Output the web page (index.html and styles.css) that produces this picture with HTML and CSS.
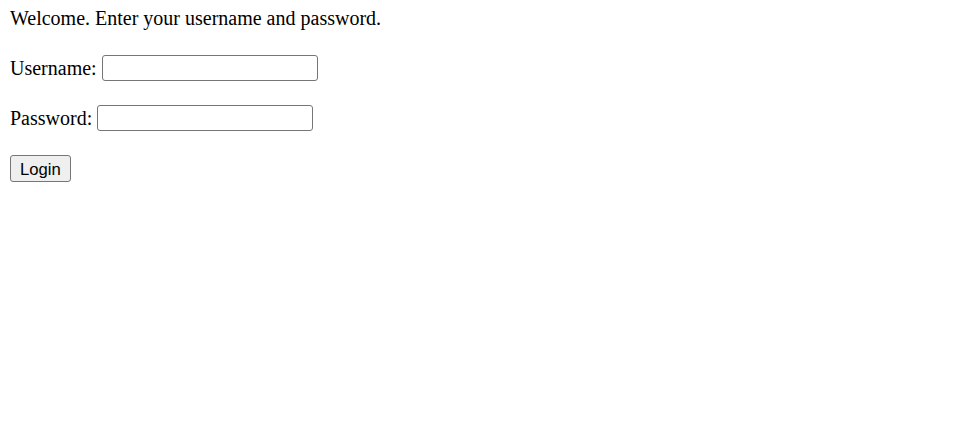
FILE: index.html
```html
<!DOCTYPE html>
<html>
<head>
<meta charset="utf-8">
<link rel="stylesheet" href="styles.css">
</head>
<body>
<div class="page">
  <div class="intro">Welcome. Enter your username and password.</div>
  <div class="row"><label class="label" for="u">Username:</label><input class="field" id="u" type="text"></div>
  <div class="row"><label class="label" for="p">Password:</label><input class="field" id="p" type="password"></div>
  <div class="row row-btn"><button class="btn" type="button">Login</button></div>
</div>
</body>
</html>
```
FILE: styles.css
```css
html, body {
  margin: 0;
  padding: 0;
  background: #ffffff;
}
.page {
  display: flex;
  flex-direction: column;
  gap: 24px;
  padding: 7px 10px 0 10px;
  font-family: "Liberation Serif", "Times New Roman", serif;
  font-size: 20px;
  color: #000000;
}
.intro {
  height: 24px;
  line-height: 23px;
  white-space: nowrap;
}
.row {
  display: flex;
  align-items: center;
  height: 26px;
}
.row-btn {
  height: 27px;
  align-items: flex-start;
}
.label {
  line-height: 23px;
  white-space: nowrap;
}
.field {
  -webkit-appearance: none;
  appearance: none;
  box-sizing: border-box;
  margin: 0 0 0 5px;
  width: 216px;
  height: 26px;
  padding: 1px 3px;
  border: 1px solid #767676;
  border-radius: 3px;
  background: #ffffff;
  font-family: "Liberation Sans", Arial, sans-serif;
  font-size: 16.67px;
}
.btn {
  -webkit-appearance: none;
  appearance: none;
  box-sizing: border-box;
  display: block;
  margin: 0;
  width: 61px;
  height: 27px;
  padding: 2px 9px 0 9px;
  border: 1px solid #767676;
  border-radius: 3px;
  background: #efefef;
  color: #000000;
  font-family: "Liberation Sans", Arial, sans-serif;
  font-size: 16.67px;
  line-height: 20px;
  text-align: left;
}
```
